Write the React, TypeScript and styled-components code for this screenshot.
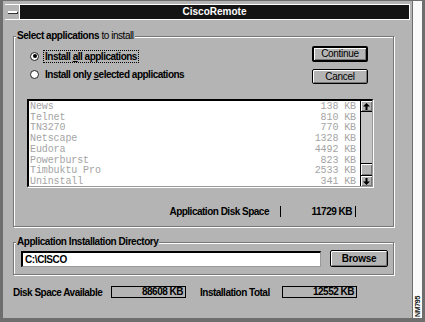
import React from 'react';
import styled, { createGlobalStyle } from 'styled-components';

const Global = createGlobalStyle`
  html, body { margin: 0; padding: 0; background: #6e6e6e; }
  body { font-family: "Liberation Sans", Arial, sans-serif; }
`;

const Frame = styled.div`
  width: 425px;
  height: 322px;
  box-sizing: border-box;
  background: #6e6e6e;
  padding: 1px 3px 4px 3px;
  display: flex;
  gap: 1px;
`;

const Dialog = styled.div`
  width: 409px;
  background: #b4b4b4;
  display: flex;
  flex-direction: column;
`;

const SideStrip = styled.div`
  width: 9px;
  background: #fafafa;
  display: flex;
  align-items: flex-end;
  justify-content: center;
  padding-bottom: 1px;
`;

const FigId = styled.span`
  writing-mode: vertical-rl;
  transform: rotate(180deg);
  font-size: 7px;
  font-weight: bold;
  letter-spacing: -0.3px;
  color: #111;
`;

const TitleBar = styled.div`
  margin: 3px 2px 0 2px;
  height: 16px;
  box-sizing: border-box;
  border-top: 1px solid #fff;
  border-bottom: 1px solid #fff;
  border-right: 1px solid #fff;
  background: #141414;
  display: flex;
`;

const SysBox = styled.div`
  width: 14px;
  background: #b4b4b4;
  border-right: 1px solid #fff;
  display: flex;
  align-items: center;
  justify-content: center;
`;

const SysDash = styled.span`
  width: 9px;
  height: 2px;
  background: #fff;
  box-shadow: 0 1px 0 #333, 1px 1px 0 #333;
`;

const TitleText = styled.div`
  flex: 1;
  color: #fff;
  font-size: 10px;
  font-weight: bold;
  text-align: center;
  line-height: 14px;
`;

const Content = styled.div`
  padding: 0 18px 0 10px;
  display: flex;
  flex-direction: column;
`;

const Group = styled.div<{ $top: number }>`
  position: relative;
  margin-top: ${p => p.$top}px;
  border: 1px solid #777;
  box-shadow: inset 1px 1px 0 #fff, 1px 1px 0 #fff;
  display: flex;
  flex-direction: column;
`;

const GroupLabel = styled.div`
  position: absolute;
  left: 2px;
  top: -7px;
  background: #b4b4b4;
  padding: 0 1px;
  font-size: 10px;
  line-height: 12px;
  letter-spacing: -0.45px;
  color: #000;
`;

const B = styled.b`
  font-weight: bold;
`;

const TopRow = styled.div`
  display: flex;
  justify-content: space-between;
  padding: 9px 25px 0 16px;
`;

const RadioCol = styled.div`
  display: flex;
  flex-direction: column;
  gap: 4px;
  padding-top: 3px;
`;

const RadioRow = styled.div`
  display: flex;
  align-items: center;
  height: 14px;
  gap: 4px;
`;

const Radio = styled.span<{ $checked?: boolean }>`
  width: 9px;
  height: 9px;
  box-sizing: border-box;
  border-radius: 50%;
  border: 1px solid #222;
  background: #fff;
  display: flex;
  align-items: center;
  justify-content: center;
  &::after {
    content: '';
    width: 4px;
    height: 4px;
    border-radius: 50%;
    background: ${p => (p.$checked ? '#000' : 'transparent')};
  }
`;

const RadioLabel = styled.span<{ $focus?: boolean }>`
  font-size: 10px;
  font-weight: bold;
  letter-spacing: -0.5px;
  line-height: 11px;
  padding: 0 1px;
  border: 1px dotted ${p => (p.$focus ? '#000' : 'transparent')};
  color: #000;
  u { text-decoration: underline; }
`;

const ButtonCol = styled.div`
  display: flex;
  flex-direction: column;
  gap: 7px;
`;

const Button = styled.button<{ $default?: boolean; $w?: number; $h?: number; $bold?: boolean }>`
  box-sizing: border-box;
  width: ${p => p.$w ?? 56}px;
  height: ${p => p.$h ?? 15}px;
  padding: 0;
  background: #b4b4b4;
  border: ${p => (p.$default ? 2 : 1)}px solid #000;
  border-radius: 2px;
  box-shadow: inset 1px 1px 0 #fff, inset -1px -1px 0 #777;
  font-family: "Liberation Sans", Arial, sans-serif;
  font-size: 10px;
  font-weight: ${p => (p.$bold ? 'bold' : 'normal')};
  letter-spacing: -0.3px;
  line-height: 10px;
  color: #000;
`;

const ListBox = styled.div`
  margin: 15px 20px 0 13px;
  height: 88px;
  box-sizing: border-box;
  background: #fff;
  border-top: 2px solid #000;
  border-left: 2px solid #000;
  border-right: 1px solid #999;
  border-bottom: 1px solid #999;
  box-shadow: 1px 1px 0 #fff;
  display: flex;
`;

const Rows = styled.div`
  flex: 1;
  padding: 0 4px 0 1px;
`;

const Row = styled.div`
  height: 10.75px;
  display: flex;
  justify-content: space-between;
  align-items: center;
  font-family: "Liberation Mono", "Courier New", monospace;
  font-size: 10px;
  letter-spacing: -0.1px;
  color: #a4a4a4;
`;

const ScrollBar = styled.div`
  width: 11px;
  border-left: 1px solid #000;
  display: flex;
  flex-direction: column;
  background: #c4c4c4;
`;

const ScrollBtn = styled.div`
  height: 11px;
  box-sizing: border-box;
  background: #b4b4b4;
  border-bottom: 1px solid #000;
  box-shadow: inset 1px 1px 0 #fff, inset -1px -1px 0 #777;
  display: flex;
  align-items: center;
  justify-content: center;
`;

const ScrollDown = styled(ScrollBtn)`
  border-bottom: none;
  border-top: 1px solid #000;
`;

const Track = styled.div`
  flex: 1;
  display: flex;
  flex-direction: column;
  justify-content: flex-end;
`;

const Thumb = styled.div`
  height: 12px;
  box-sizing: border-box;
  background: #b4b4b4;
  border-top: 1px solid #000;
  box-shadow: inset 1px 1px 0 #fff, inset -1px -1px 0 #777;
`;

const DiskRow = styled.div`
  margin: 18px 37px 9px 0;
  height: 12px;
  display: flex;
  justify-content: flex-end;
  align-items: center;
  gap: 11px;
`;

const PlainLabel = styled.span<{ $w?: number }>`
  font-size: 10px;
  font-weight: bold;
  letter-spacing: -0.5px;
  color: #000;
  white-space: nowrap;
  ${p => (p.$w ? `width: ${p.$w}px;` : '')}
`;

const SpaceField = styled.div`
  width: 76px;
  height: 11px;
  box-sizing: border-box;
  border-left: 1px solid #000;
  border-right: 1px solid #000;
  text-align: right;
  padding-right: 3px;
  font-size: 10px;
  font-weight: bold;
  letter-spacing: -0.5px;
  line-height: 11px;
  color: #000;
`;

const DirRow = styled.div`
  display: flex;
  align-items: center;
  gap: 9px;
  padding: 7px 5px 7px 7px;
`;

const TextInput = styled.div`
  flex: 1;
  height: 16px;
  box-sizing: border-box;
  background: #fff;
  border-top: 2px solid #000;
  border-left: 2px solid #000;
  border-right: 1px solid #999;
  border-bottom: 1px solid #999;
  padding-left: 2px;
  font-size: 10px;
  font-weight: bold;
  letter-spacing: -0.4px;
  line-height: 13px;
  color: #000;
`;

const StatusRow = styled.div`
  margin-top: 11px;
  height: 12px;
  display: flex;
  align-items: center;
`;

const ValueBox = styled.div`
  width: 75px;
  height: 12px;
  box-sizing: border-box;
  border: 1px solid #000;
  text-align: right;
  padding-right: 2px;
  font-size: 10px;
  font-weight: bold;
  letter-spacing: -0.5px;
  line-height: 10px;
  color: #000;
  margin-right: 14px;
`;

const Arrow = ({ up }: { up?: boolean }) => (
  <svg width="7" height="7" viewBox="0 0 7 7">
    <g transform={up ? undefined : 'rotate(180 3.5 3.5)'}>
      <polygon points="3.5,0 7,3.5 0,3.5" fill="#000" />
      <rect x="2.5" y="3" width="2" height="4" fill="#000" />
    </g>
  </svg>
);

const apps: [string, string][] = [
  ['News', '138 KB'],
  ['Telnet', '810 KB'],
  ['TN3270', '770 KB'],
  ['Netscape', '1328 KB'],
  ['Eudora', '4492 KB'],
  ['Powerburst', '823 KB'],
  ['Timbuktu Pro', '2533 KB'],
  ['Uninstall', '341 KB'],
];

export default function App() {
  return (
    <>
      <Global />
      <Frame>
        <Dialog>
          <TitleBar>
            <SysBox>
              <SysDash />
            </SysBox>
            <TitleText>CiscoRemote</TitleText>
          </TitleBar>
          <Content>
            <Group $top={16}>
              <GroupLabel>
                <B>Select applications</B> to install
              </GroupLabel>
              <TopRow>
                <RadioCol>
                  <RadioRow>
                    <Radio $checked />
                    <RadioLabel $focus>
                      Install <u>a</u>ll applications
                    </RadioLabel>
                  </RadioRow>
                  <RadioRow>
                    <Radio />
                    <RadioLabel>
                      Install only <u>s</u>elected applications
                    </RadioLabel>
                  </RadioRow>
                </RadioCol>
                <ButtonCol>
                  <Button $default $h={16}>Continue</Button>
                  <Button>Cancel</Button>
                </ButtonCol>
              </TopRow>
              <ListBox>
                <Rows>
                  {apps.map(([n, s]) => (
                    <Row key={n}>
                      <span>{n}</span>
                      <span>{s}</span>
                    </Row>
                  ))}
                </Rows>
                <ScrollBar>
                  <ScrollBtn>
                    <Arrow up />
                  </ScrollBtn>
                  <Track>
                    <Thumb />
                  </Track>
                  <ScrollDown>
                    <Arrow />
                  </ScrollDown>
                </ScrollBar>
              </ListBox>
              <DiskRow>
                <PlainLabel>Application Disk Space</PlainLabel>
                <SpaceField>11729 KB</SpaceField>
              </DiskRow>
            </Group>
            <Group $top={15}>
              <GroupLabel>
                <B>Application Installation Directory</B>
              </GroupLabel>
              <DirRow>
                <TextInput>C:\CISCO</TextInput>
                <Button $w={58} $h={17} $bold>Browse</Button>
              </DirRow>
            </Group>
            <StatusRow>
              <PlainLabel $w={98}>Disk Space Available</PlainLabel>
              <ValueBox>88608 KB</ValueBox>
              <PlainLabel $w={82}>Installation Total</PlainLabel>
              <ValueBox>12552 KB</ValueBox>
            </StatusRow>
          </Content>
        </Dialog>
        <SideStrip>
          <FigId>NM795</FigId>
        </SideStrip>
      </Frame>
    </>
  );
}
